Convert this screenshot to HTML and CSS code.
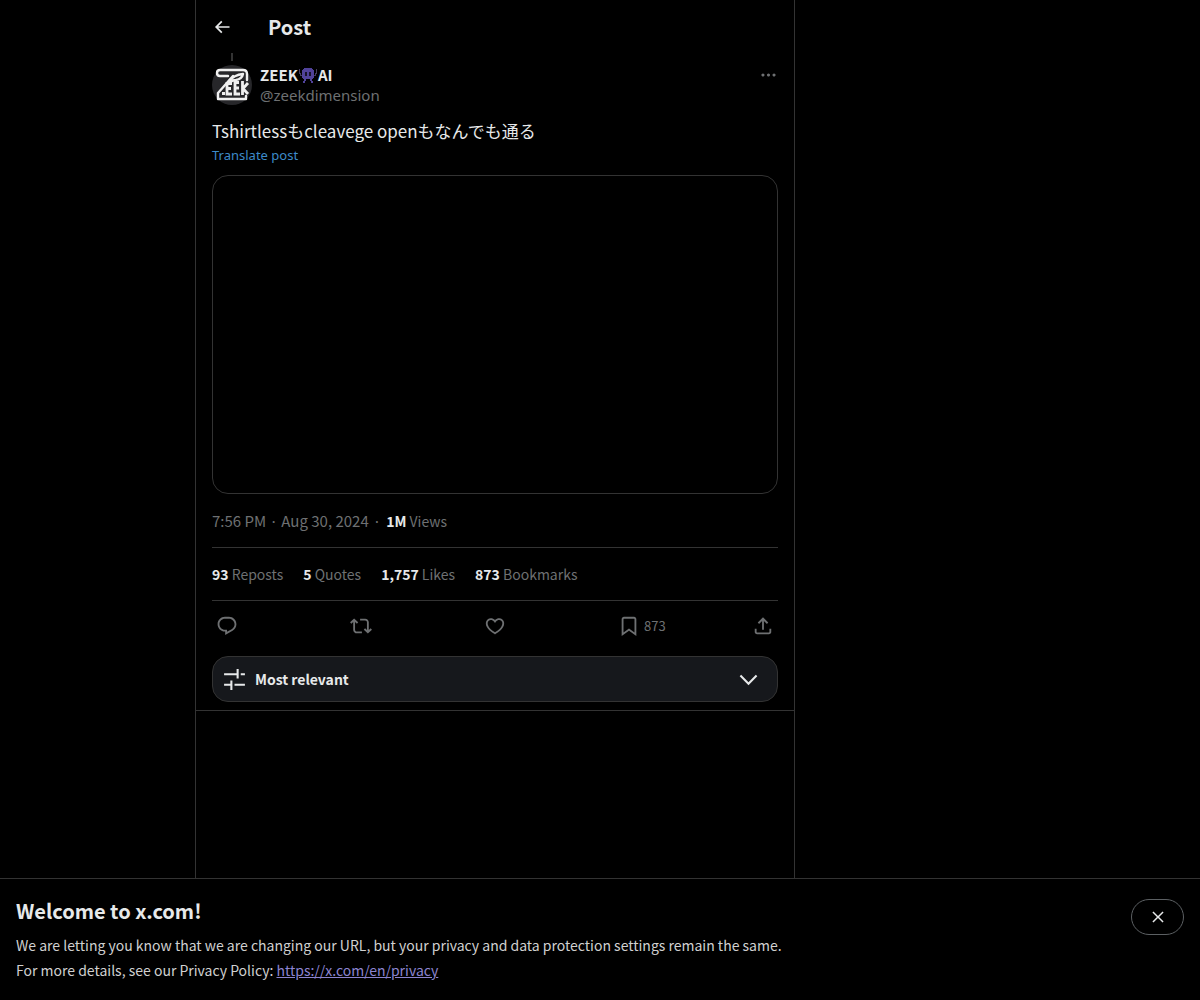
FILE: index.html
```
<!DOCTYPE html>
<html lang="en">
<head>
    <meta charset="UTF-8">
    <meta name="viewport" content="width=device-width, initial-scale=1.0">
    <title>ZEEK AI on X</title>
    <link rel="stylesheet" href="styles.css">
</head>
<body>
    <main class="column">
        <header class="top-bar">
            <button class="icon-btn back" type="button" aria-label="Back">
                <svg viewBox="0 0 24 24"><path d="M7.414 13l5.043 5.04-1.414 1.42L3.586 12l7.457-7.46 1.414 1.42L7.414 11H21v2H7.414z"/></svg>
            </button>
            <h1>Post</h1>
        </header>

        <article class="post">
            <div class="thread-line"></div>
            <div class="author">
                <svg class="avatar" viewBox="0 0 40 40" role="img" aria-label="ZEEK">
                    <circle cx="20" cy="20" r="20" fill="#27272a"/>
                    <g fill="none" stroke="#f0f0f0" stroke-width="2.4" stroke-linejoin="round" stroke-linecap="round">
                        <path d="M16 11H8Q5 11 5 8T8 5H31Q35 5 35 9V15"/>
                        <path d="M21 11L6 28V34H34V31"/>
                        <path d="M17 16Q22 10 31 9Q30 14 24 15Q20 15 17 18"/>
                    </g>
                    <g fill="none" stroke="#f0f0f0" stroke-width="2.8">
                        <path d="M20 18.500H15V29H20M15 23.500H19"/>
                        <path d="M27 17.500H23V29H28M23 23H27"/>
                        <path d="M30.500 16V30M36 18L31 23.500L36 29"/>
                    </g>
                    <path d="M10 27h3v3h-3z" fill="#f0f0f0"/>
                </svg>
                <div class="names">
                    <a class="name" href="#">ZEEK<svg class="monster" viewBox="0 0 18 18" role="img" aria-label="alien monster">
                        <path d="M5 2h8v1h1v1h1v8h-1v1h-1v2h-2v-2H7v2H5v-2H4v-1H3V4h1V3h1zM4 15h2v2H4zM12 15h2v2h-2z" fill="#50429a"/>
                        <path d="M0 3h1v4h1v2h1v1H1V8H0zM17 3h1v5h-1v2h-2V9h1V7h1z" fill="#443c60"/>
                        <path d="M6 6h2v4H6zM10 6h2v4h-2z" fill="#171329"/>
                    </svg>AI</a>
                    <a class="handle" href="#">@zeekdimension</a>
                </div>
                <button class="icon-btn more" type="button" aria-label="More">
                    <svg viewBox="0 0 24 24"><path d="M3 12c0-1.1.9-2 2-2s2 .9 2 2-.9 2-2 2-2-.9-2-2zm9 2c1.1 0 2-.9 2-2s-.9-2-2-2-2 .9-2 2 .9 2 2 2zm7 0c1.1 0 2-.9 2-2s-.9-2-2-2-2 .9-2 2 .9 2 2 2z"/></svg>
                </button>
            </div>

            <p class="text" lang="ja">Tshirtlessもcleavege openもなんでも通る</p>
            <button class="translate" type="button">Translate post</button>

            <div class="media"></div>

            <div class="meta">
                <a href="#">7:56 PM · Aug 30, 2024</a><span class="dot">·</span><span class="views"><b>1M</b> Views</span>
            </div>

            <div class="stats">
                <a href="#"><b>93</b> Reposts</a>
                <a href="#"><b>5</b> Quotes</a>
                <a href="#"><b>1,757</b> Likes</a>
                <a href="#"><b>873</b> Bookmarks</a>
            </div>

            <div class="actions">
                <button type="button" aria-label="Reply">
                    <svg viewBox="0 0 24 24"><path d="M1.751 10c0-4.42 3.584-8 8.005-8h4.366c4.49 0 8.129 3.64 8.129 8.13 0 2.96-1.607 5.68-4.196 7.11l-8.054 4.46v-3.69h-.067c-4.49.1-8.183-3.51-8.183-8.01zm8.005-6c-3.317 0-6.005 2.69-6.005 6 0 3.37 2.77 6.08 6.138 6.01l.351-.01h1.761v2.3l5.087-2.81c1.951-1.08 3.163-3.13 3.163-5.36 0-3.39-2.744-6.13-6.129-6.13H9.756z"/></svg>
                </button>
                <button type="button" aria-label="Repost">
                    <svg viewBox="0 0 24 24"><path d="M4.5 3.88l4.432 4.14-1.364 1.46L5.5 7.55V16c0 1.1.896 2 2 2H13v2H7.5c-2.209 0-4-1.79-4-4V7.55L1.432 9.48.068 8.02 4.5 3.88zM16.5 6H11V4h5.5c2.209 0 4 1.79 4 4v8.45l2.068-1.93 1.364 1.46-4.432 4.14-4.432-4.14 1.364-1.46 2.068 1.93V8c0-1.1-.896-2-2-2z"/></svg>
                </button>
                <button type="button" aria-label="Like">
                    <svg viewBox="0 0 24 24"><path d="M16.697 5.5c-1.222-.06-2.679.51-3.89 2.16l-.805 1.09-.806-1.09C9.984 6.01 8.526 5.44 7.304 5.5c-1.243.07-2.349.78-2.91 1.91-.552 1.12-.633 2.78.479 4.82 1.074 1.97 3.257 4.27 7.129 6.61 3.87-2.34 6.052-4.64 7.126-6.61 1.111-2.04 1.03-3.7.477-4.82-.561-1.13-1.666-1.84-2.908-1.91zm4.187 7.69c-1.351 2.48-4.001 5.12-8.379 7.67l-.503.3-.504-.3c-4.379-2.55-7.029-5.19-8.382-7.67-1.36-2.5-1.41-4.86-.514-6.67.887-1.79 2.647-2.91 4.601-3.01 1.651-.09 3.368.56 4.798 2.01 1.429-1.45 3.146-2.1 4.796-2.01 1.954.1 3.714 1.22 4.601 3.01.896 1.81.846 4.17-.514 6.67z"/></svg>
                </button>
                <button type="button" aria-label="Bookmark">
                    <svg viewBox="0 0 24 24"><path d="M4 4.5C4 3.12 5.119 2 6.5 2h11C18.881 2 20 3.12 20 4.5v18.44l-8-5.71-8 5.71V4.5zM6.5 4c-.276 0-.5.22-.5.5v14.56l6-4.29 6 4.29V4.5c0-.28-.224-.5-.5-.5h-11z"/></svg>
                    <span>873</span>
                </button>
                <button type="button" aria-label="Share">
                    <svg viewBox="0 0 24 24"><path d="M12 2.59l5.7 5.7-1.41 1.42L13 6.41V16h-2V6.41l-3.3 3.3-1.41-1.42L12 2.59zM21 15l-.02 3.51c0 1.38-1.12 2.49-2.5 2.49H5.5C4.11 21 3 19.88 3 18.5V15h2v3.5c0 .28.22.5.5.5h12.98c.28 0 .5-.22.5-.5L19 15h2z"/></svg>
                </button>
            </div>

            <button class="sort" type="button">
                <svg viewBox="0 0 24 24"><path d="M2 6h12V2h2v9h-2V8H2zM18 6h4v2h-4zM2 16h6v-3h2v9H8v-4H2zM12 16h10v2H12z"/></svg>
                <span>Most relevant</span>
                <svg viewBox="0 0 24 24"><path d="M3.543 8.96l1.414-1.42L12 14.59l7.043-7.05 1.414 1.42L12 17.41 3.543 8.96z"/></svg>
            </button>
        </article>
    </main>

    <section class="notice">
        <div class="notice-text">
            <h2>Welcome to x.com!</h2>
            <p>We are letting you know that we are changing our URL, but your privacy and data protection settings remain the same.</p>
            <p>For more details, see our Privacy Policy: <a href="https://x.com/en/privacy">https://x.com/en/privacy</a></p>
        </div>
        <button class="close" type="button" aria-label="Close">
            <svg viewBox="0 0 24 24"><path d="M10.59 12L4.54 5.96l1.42-1.42L12 10.59l6.04-6.05 1.42 1.42L13.41 12l6.05 6.04-1.42 1.42L12 13.41l-6.04 6.05-1.42-1.42L10.59 12z"/></svg>
        </button>
    </section>
</body>
</html>
```
FILE: styles.css
```
* {
    box-sizing: border-box;
}
body {
    margin: 0;
    background-color: #000;
    color: #e7e9ea;
    font-family: "Noto Sans CJK JP", sans-serif;
    font-size: 15px;
    line-height: 20px;
}
h1, h2, p {
    margin: 0;
}
a {
    color: inherit;
    text-decoration: none;
}
button {
    padding: 0;
    border: 0;
    background: none;
    color: inherit;
    font: inherit;
    cursor: pointer;
}
svg {
    display: block;
    fill: currentColor;
}
.column {
    max-width: 600px;
    min-height: 100vh;
    margin-left: 195px;
    border-left: 1px solid #333;
    border-right: 1px solid #333;
}
.top-bar {
    display: flex;
    align-items: center;
    height: 53px;
    padding: 0 16px;
}
.top-bar h1 {
    margin-left: 36px;
    font-size: 20px;
    line-height: 24px;
}
.icon-btn svg {
    width: 20px;
    height: 20px;
}
.post {
    padding: 0 16px 8px;
    border-bottom: 1px solid #333;
}
.thread-line {
    width: 2px;
    height: 8px;
    margin-left: 19px;
    background-color: #333;
}
.author {
    display: flex;
    align-items: flex-start;
    gap: 8px;
    padding-top: 4px;
}
.avatar {
    width: 40px;
    height: 40px;
}
.names {
    display: flex;
    flex: 1;
    flex-direction: column;
    align-items: flex-start;
}
.name {
    display: flex;
    align-items: center;
    font-weight: bold;
}
.monster {
    width: 18px;
    height: 18px;
    margin: 0 1px;
}
.handle {
    font-family: "Noto Sans", sans-serif;
}
.handle, .more, .meta, .stats, .actions {
    color: #6e7072;
}
.more svg {
    width: 19px;
}
.text {
    margin-top: 14px;
    font-size: 17px;
    line-height: 24px;
}
.translate {
    display: block;
    margin-top: 4px;
    color: #3d8bc9;
    font-family: "Noto Sans", sans-serif;
    font-size: 13px;
    line-height: 16px;
}
.media {
    height: 319px;
    margin-top: 12px;
    border: 1px solid #333;
    border-radius: 16px;
}
.meta {
    padding: 17px 0 16px;
}
.views {
    font-size: 14px;
}
.dot {
    padding: 0 5px 0 4px;
}
.meta b, .stats b {
    color: #e7e9ea;
}
.stats {
    display: flex;
    flex-wrap: wrap;
    gap: 20px;
    padding: 16px 0;
    border-top: 1px solid #333;
    border-bottom: 1px solid #333;
    font-size: 14px;
}
.actions {
    display: flex;
    height: 49px;
    padding: 0 4px;
}
.actions button {
    display: flex;
    flex: 1;
    align-items: center;
    gap: 4px;
    font-size: 13px;
}
.actions button:last-child {
    flex: none;
}
.actions svg {
    width: 22px;
    height: 22px;
}
.sort {
    display: flex;
    align-items: center;
    gap: 8px;
    width: 100%;
    height: 46px;
    margin-top: 6px;
    padding: 0 16px 0 9px;
    border: 1px solid #333;
    border-radius: 16px;
    background-color: #16181c;
    font-size: 14px;
    font-weight: bold;
    text-align: left;
}
.sort span {
    flex: 1;
}
.sort svg {
    width: 25px;
    height: 25px;
}
.notice {
    position: fixed;
    right: 0;
    bottom: 0;
    left: 0;
    display: flex;
    align-items: flex-start;
    gap: 16px;
    padding: 20px 16px 16px;
    border-top: 1px solid #333;
    background-color: #000;
}
.notice-text {
    flex: 1;
    padding-bottom: 1px;
    color: #d0d0d0;
    font-size: 14px;
    line-height: 25px;
}
.notice h2 {
    margin-bottom: 10px;
    color: #e7e9ea;
    font-size: 20px;
    line-height: 24px;
}
.notice a {
    color: #8c84d0;
    text-decoration: underline;
}
.close {
    display: flex;
    align-items: center;
    justify-content: center;
    width: 53px;
    height: 36px;
    border: 1px solid #5c6063;
    border-radius: 18px;
}
.close svg {
    width: 18px;
    height: 18px;
}
```
